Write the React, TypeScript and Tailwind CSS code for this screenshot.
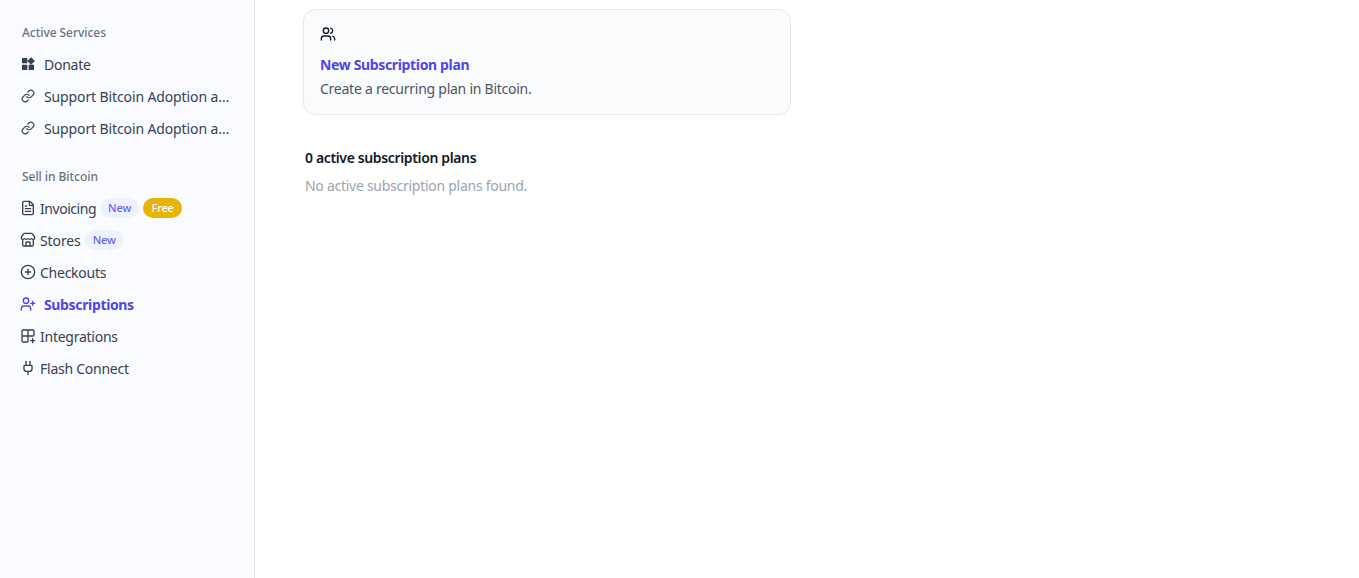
import React from 'react';
import {
  Link,
  FileText,
  Store,
  CirclePlus,
  UserPlus,
  Grid2x2Plus,
  Plug,
  Users,
} from 'lucide-react';
import { MdWidgets } from 'react-icons/md';

const NewBadge = () => (
  <span className="flex h-[20px] w-[39px] items-center justify-center rounded-full bg-[#eef2ff] text-[11px] font-medium tracking-[-0.15px] text-[#6366f1]">New</span>
);

const FreeBadge = () => (
  <span className="flex h-[20px] w-[39px] items-center justify-center rounded-full bg-[#eab308] text-[11px] font-medium tracking-[-0.15px] text-white">Free</span>
);

const App: React.FC = () => {
  return (
    <div className="flex h-[578px] w-full overflow-hidden bg-white font-['Noto_Sans',sans-serif]">
      <aside className="w-[255px] shrink-0 border-r border-[#e5e7eb] bg-[#f9fbfe] pl-[20px] pr-[24px] pt-[17px]">
        <div className="ml-[2px] flex h-[31px] items-center text-[12px] font-medium tracking-[-0.05px] text-[#6b7280]">Active Services</div>
        <div className="flex h-[32px] items-center gap-[8px] text-[14px] tracking-[-0.25px] text-[#374151]">
          <MdWidgets size={16} className="shrink-0" />
          <span>Donate</span>
        </div>
        <div className="flex h-[32px] items-center gap-[8px] text-[14px] tracking-[-0.12px] text-[#374151]">
          <Link size={14} className="mx-[1px] shrink-0" />
          <span className="truncate">Support Bitcoin Adoption and Education</span>
        </div>
        <div className="flex h-[32px] items-center gap-[8px] text-[14px] tracking-[-0.12px] text-[#374151]">
          <Link size={14} className="mx-[1px] shrink-0" />
          <span className="truncate">Support Bitcoin Adoption and Education</span>
        </div>

        <div className="ml-[2px] mt-[17px] flex h-[31px] items-center text-[12px] font-medium tracking-[-0.05px] text-[#6b7280]">Sell in Bitcoin</div>
        <div className="flex h-[32px] items-center gap-[4px] text-[14px] text-[#374151]">
          <FileText size={16} className="shrink-0" />
          <span className="tracking-[-0.45px]">Invoicing</span>
          <NewBadge />
          <FreeBadge />
        </div>
        <div className="flex h-[32px] items-center gap-[4px] text-[14px] text-[#374151]">
          <Store size={16} className="shrink-0" />
          <span className="tracking-[-0.1px]">Stores</span>
          <NewBadge />
        </div>
        <div className="flex h-[32px] items-center gap-[4px] text-[14px] tracking-[-0.25px] text-[#374151]">
          <CirclePlus size={16} className="shrink-0" />
          <span>Checkouts</span>
        </div>
        <div className="flex h-[32px] items-center gap-[8px] text-[14px] font-bold tracking-[-0.35px] text-[#4f46e5]">
          <UserPlus size={16} className="shrink-0" />
          <span>Subscriptions</span>
        </div>
        <div className="flex h-[32px] items-center gap-[4px] text-[14px] tracking-[-0.25px] text-[#374151]">
          <Grid2x2Plus size={16} className="shrink-0" />
          <span>Integrations</span>
        </div>
        <div className="flex h-[32px] items-center gap-[4px] text-[14px] tracking-[-0.25px] text-[#374151]">
          <Plug size={16} className="shrink-0" />
          <span>Flash Connect</span>
        </div>
      </aside>

      <main className="flex-1 pl-[48px] pt-[9px]">
        <div className="h-[106px] w-[488px] rounded-[12px] border border-[#e5e7eb] bg-[#f9fbfd] px-[16px] pt-[16px]">
          <Users size={16} className="text-[#111827]" />
          <div className="mt-[13px] text-[14px] font-bold leading-[20px] tracking-[-0.35px] text-[#4f46e5]">New Subscription plan</div>
          <div className="mt-[4px] text-[14px] leading-[20px] tracking-[-0.25px] text-[#4b5563]">Create a recurring plan in Bitcoin.</div>
        </div>
        <div className="ml-[2px] mt-[33px] text-[14px] font-semibold leading-[20px] tracking-[-0.36px] text-[#111827]">0 active subscription plans</div>
        <div className="ml-[2px] mt-[8px] text-[14px] leading-[20px] tracking-[-0.27px] text-[#9ca3af]">No active subscription plans found.</div>
      </main>
    </div>
  );
};

export default App;
